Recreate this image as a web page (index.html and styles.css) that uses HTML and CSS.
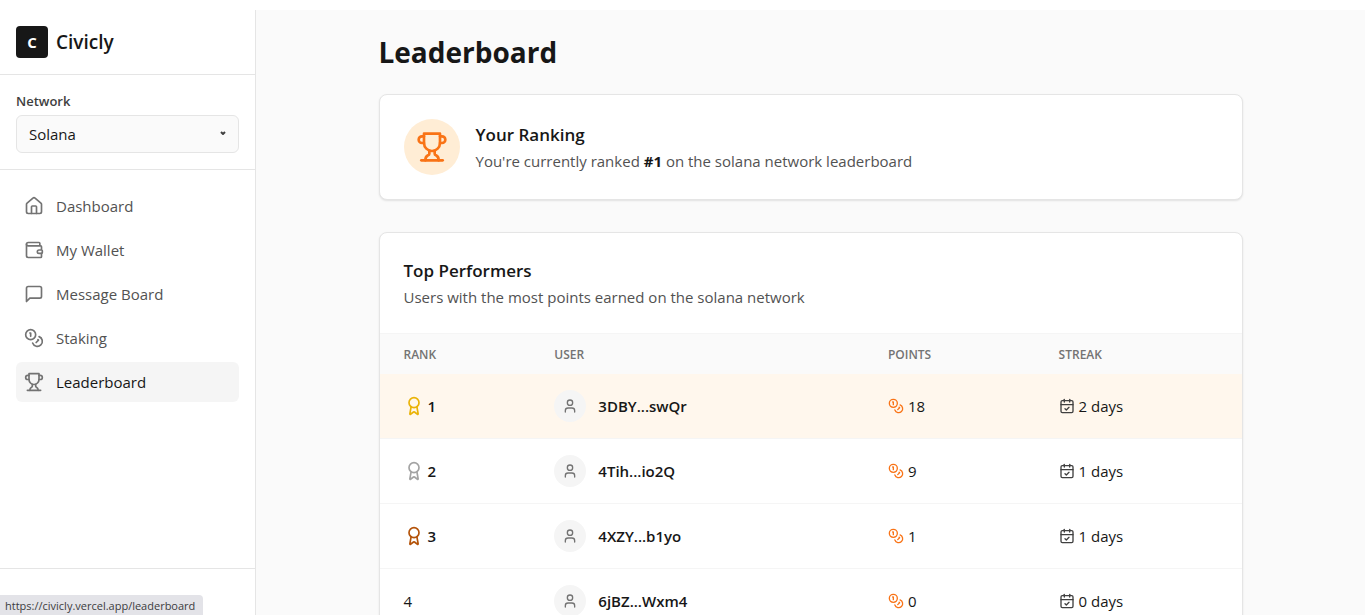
FILE: index.html
```html
<!DOCTYPE html>
<html lang="en">
<head>
<meta charset="utf-8">
<meta name="viewport" content="width=device-width, initial-scale=1">
<title>Civicly - Leaderboard</title>
<link rel="stylesheet" href="styles.css">
</head>
<body>
<svg class="sprite" aria-hidden="true">
  <symbol id="house" viewBox="0 0 24 24"><path d="M15 21v-8a1 1 0 0 0-1-1h-4a1 1 0 0 0-1 1v8"/><path d="M3 10a2 2 0 0 1 .709-1.528l7-5.999a2 2 0 0 1 2.582 0l7 5.999A2 2 0 0 1 21 10v9a2 2 0 0 1-2 2H5a2 2 0 0 1-2-2z"/></symbol>
  <symbol id="wallet" viewBox="0 0 24 24"><path d="M19 7V4a1 1 0 0 0-1-1H5a2 2 0 0 0 0 4h15a1 1 0 0 1 1 1v4h-3a2 2 0 0 0 0 4h3a1 1 0 0 0 1-1v-2a1 1 0 0 0-1-1"/><path d="M3 5v14a2 2 0 0 0 2 2h15a1 1 0 0 0 1-1v-4"/></symbol>
  <symbol id="message" viewBox="0 0 24 24"><path d="M21 15a2 2 0 0 1-2 2H7l-4 4V5a2 2 0 0 1 2-2h14a2 2 0 0 1 2 2z"/></symbol>
  <symbol id="coins" viewBox="0 0 24 24"><circle cx="8" cy="8" r="6"/><path d="M18.09 10.37A6 6 0 1 1 10.34 18"/><path d="M7 6h1v4"/><path d="m16.71 13.88.7.71-2.82 2.82"/></symbol>
  <symbol id="trophy" viewBox="0 0 24 24"><path d="M6 9H4.5a2.5 2.5 0 0 1 0-5H6"/><path d="M18 9h1.5a2.5 2.5 0 0 0 0-5H18"/><path d="M4 22h16"/><path d="M10 14.66V17c0 .55-.47.98-.97 1.21C7.85 18.75 7 20.24 7 22"/><path d="M14 14.66V17c0 .55.47.98.97 1.21C16.15 18.75 17 20.24 17 22"/><path d="M18 2H6v7a6 6 0 0 0 12 0V2Z"/></symbol>
  <symbol id="award" viewBox="0 0 24 24"><path d="m15.477 12.89 1.515 8.526a.5.5 0 0 1-.81.47l-3.58-2.687a1 1 0 0 0-1.197 0l-3.586 2.686a.5.5 0 0 1-.81-.469l1.514-8.526"/><circle cx="12" cy="8" r="6"/></symbol>
  <symbol id="user" viewBox="0 0 24 24"><path d="M19 21v-2a4 4 0 0 0-4-4H9a4 4 0 0 0-4 4v2"/><circle cx="12" cy="7" r="4"/></symbol>
  <symbol id="calendar" viewBox="0 0 24 24"><path d="M8 2v4"/><path d="M16 2v4"/><rect width="18" height="18" x="3" y="4" rx="2"/><path d="M3 10h18"/><path d="m9 16 2 2 4-4"/></symbol>
</svg>

<div class="app">
  <aside class="sidebar">
    <div class="brand"><span class="logo">C</span><span class="brand-name">Civicly</span></div>
    <div class="network">
      <label class="network-label" for="network">Network</label>
      <div class="select-wrap">
        <select class="select" id="network"><option>Solana</option></select>
        <svg class="chevron" viewBox="0 0 6 4"><path d="M1 1l2 2 2-2"/></svg>
      </div>
    </div>
    <nav class="nav">
      <a class="nav-link" href="#dashboard"><svg class="icon icon-md"><use href="#house"/></svg>Dashboard</a>
      <a class="nav-link" href="#wallet-page"><svg class="icon icon-md"><use href="#wallet"/></svg>My Wallet</a>
      <a class="nav-link" href="#messages"><svg class="icon icon-md"><use href="#message"/></svg>Message Board</a>
      <a class="nav-link" href="#staking"><svg class="icon icon-md"><use href="#coins"/></svg>Staking</a>
      <a class="nav-link active" href="#leaderboard" aria-current="page"><svg class="icon icon-md"><use href="#trophy"/></svg>Leaderboard</a>
    </nav>
    <div class="sidebar-footer"></div>
  </aside>

  <main class="main">
    <div class="content">
      <h1 class="title">Leaderboard</h1>
      <section class="card ranking">
        <div class="trophy-badge"><svg class="icon icon-lg"><use href="#trophy"/></svg></div>
        <div>
          <h2 class="card-title">Your Ranking</h2>
          <p class="card-text">You're currently ranked <strong class="rank-value">#1</strong> on the solana network leaderboard</p>
        </div>
      </section>
      <section class="card">
        <div class="card-head">
          <h2 class="card-title">Top Performers</h2>
          <p class="card-text">Users with the most points earned on the solana network</p>
        </div>
        <table class="table">
          <thead>
            <tr><th class="col-rank">Rank</th><th class="col-user">User</th><th class="col-points">Points</th><th>Streak</th></tr>
          </thead>
          <tbody>
            <tr class="current">
              <td><div class="cell medal"><svg class="icon icon-md gold"><use href="#award"/></svg>1</div></td>
              <td><div class="cell user"><span class="avatar"><svg class="icon icon-sm"><use href="#user"/></svg></span>3DBY...swQr</div></td>
              <td><div class="cell"><svg class="icon icon-sm orange"><use href="#coins"/></svg>18</div></td>
              <td><div class="cell"><svg class="icon icon-sm gray"><use href="#calendar"/></svg>2 days</div></td>
            </tr>
            <tr>
              <td><div class="cell medal"><svg class="icon icon-md silver"><use href="#award"/></svg>2</div></td>
              <td><div class="cell user"><span class="avatar"><svg class="icon icon-sm"><use href="#user"/></svg></span>4Tih...io2Q</div></td>
              <td><div class="cell"><svg class="icon icon-sm orange"><use href="#coins"/></svg>9</div></td>
              <td><div class="cell"><svg class="icon icon-sm gray"><use href="#calendar"/></svg>1 days</div></td>
            </tr>
            <tr>
              <td><div class="cell medal"><svg class="icon icon-md bronze"><use href="#award"/></svg>3</div></td>
              <td><div class="cell user"><span class="avatar"><svg class="icon icon-sm"><use href="#user"/></svg></span>4XZY...b1yo</div></td>
              <td><div class="cell"><svg class="icon icon-sm orange"><use href="#coins"/></svg>1</div></td>
              <td><div class="cell"><svg class="icon icon-sm gray"><use href="#calendar"/></svg>1 days</div></td>
            </tr>
            <tr>
              <td><div class="cell">4</div></td>
              <td><div class="cell user"><span class="avatar"><svg class="icon icon-sm"><use href="#user"/></svg></span>6jBZ...Wxm4</div></td>
              <td><div class="cell"><svg class="icon icon-sm orange"><use href="#coins"/></svg>0</div></td>
              <td><div class="cell"><svg class="icon icon-sm gray"><use href="#calendar"/></svg>0 days</div></td>
            </tr>
          </tbody>
        </table>
      </section>
    </div>
  </main>
</div>
<div class="status">https://civicly.vercel.app/leaderboard</div>
</body>
</html>
```

FILE: styles.css
```css
* { box-sizing: border-box; }

body {
  margin: 0;
  padding-top: 10px;
  height: 100vh;
  overflow: hidden;
  background: #fff;
  color: #171717;
  font: 15px/24px "Open Sans", "Noto Sans", sans-serif;
}

h1, h2, p { margin: 0; }

.sprite { position: absolute; width: 0; height: 0; }

.icon {
  flex: none;
  fill: none;
  stroke: currentColor;
  stroke-width: 2;
  stroke-linecap: round;
  stroke-linejoin: round;
}
.icon-sm { width: 16px; height: 16px; }
.icon-md { width: 20px; height: 20px; }
.icon-lg { width: 32px; height: 32px; }

.app { display: flex; height: 100%; }

.sidebar {
  display: flex;
  flex-direction: column;
  flex: none;
  width: 256px;
  border-right: 1px solid #e5e5e5;
}

.brand {
  display: flex;
  align-items: center;
  gap: 8px;
  padding: 16px;
  border-bottom: 1px solid #e5e5e5;
}
.logo {
  display: grid;
  place-items: center;
  width: 32px;
  height: 32px;
  border-radius: 4px;
  background: #171717;
  color: #fff;
  font-weight: 700;
}
.brand-name { font-size: 19px; font-weight: 600; line-height: 28px; }

.network { padding: 16px; border-bottom: 1px solid #e5e5e5; }
.network-label {
  display: block;
  margin-bottom: 4px;
  color: #404040;
  font-size: 13px;
  font-weight: 600;
  line-height: 20px;
}
.select-wrap { position: relative; }
.select {
  display: block;
  width: 100%;
  height: 38px;
  padding: 0 12px;
  appearance: none;
  border: 1px solid #e5e5e5;
  border-radius: 6px;
  background: #fafafa;
  color: #171717;
  font: inherit;
}
.chevron {
  position: absolute;
  top: 16px;
  right: 13px;
  width: 6px;
  height: 4px;
  fill: none;
  stroke: #404040;
  stroke-width: 2;
  pointer-events: none;
}

.nav {
  display: flex;
  flex: 1;
  flex-direction: column;
  gap: 4px;
  padding: 16px;
}
.nav-link {
  display: flex;
  align-items: center;
  gap: 12px;
  padding: 8px;
  border-radius: 6px;
  color: #525252;
  text-decoration: none;
}
.nav-link .icon { color: #737373; }
.nav-link.active { background: #f5f5f5; color: #171717; }

.sidebar-footer { height: 47px; border-top: 1px solid #e5e5e5; }

.main { flex: 1; min-width: 0; overflow: hidden; background: #fafafa; }
.content { max-width: 912px; margin: 0 auto; padding: 24px; }
.title { margin-bottom: 24px; font-size: 28px; font-weight: 700; line-height: 36px; }

.card {
  overflow: hidden;
  margin-bottom: 32px;
  border: 1px solid #e5e5e5;
  border-radius: 8px;
  background: #fff;
  box-shadow: 0 1px 2px rgba(0, 0, 0, 0.1);
}
.ranking { display: flex; align-items: center; gap: 16px; padding: 24px; }
.trophy-badge {
  display: grid;
  place-items: center;
  width: 56px;
  height: 56px;
  border-radius: 50%;
  background: #ffedd5;
  color: #f97316;
}
.card-head { padding: 24px; }
.card-title { font-size: 17px; font-weight: 600; line-height: 28px; }
.card-text { color: #525252; }
.rank-value { color: #171717; font-weight: 700; }

.table { width: 100%; border-collapse: separate; border-spacing: 0; table-layout: fixed; }
.table th {
  padding: 13px 24px 11px;
  border-top: 1px solid #f5f5f5;
  background: #fafafa;
  color: #737373;
  font-size: 12px;
  font-weight: 600;
  line-height: 16px;
  text-align: left;
  text-transform: uppercase;
}
.col-rank { width: 17.5%; }
.col-user { width: 38.7%; }
.col-points { width: 19.8%; }
.table td { height: 65px; padding: 0 24px; border-bottom: 1px solid #f5f5f5; }
.current { background: #fff7ed; }
.cell { display: flex; align-items: center; gap: 4px; }
.medal { font-weight: 600; }
.user { gap: 12px; font-weight: 600; }
.avatar {
  display: grid;
  place-items: center;
  width: 32px;
  height: 32px;
  border-radius: 50%;
  background: #f5f5f5;
  color: #737373;
}
.gold { color: #eab308; }
.silver { color: #a3a3a3; }
.bronze { color: #b45309; }
.orange { color: #f97316; }
.gray { color: #404040; }

.status {
  position: absolute;
  bottom: 0;
  left: 0;
  padding: 2px 8px 0 5px;
  border-radius: 0 4px 0 0;
  background: #e3e3e8;
  color: #3c3c40;
  font-size: 11px;
  line-height: 18px;
}
```
